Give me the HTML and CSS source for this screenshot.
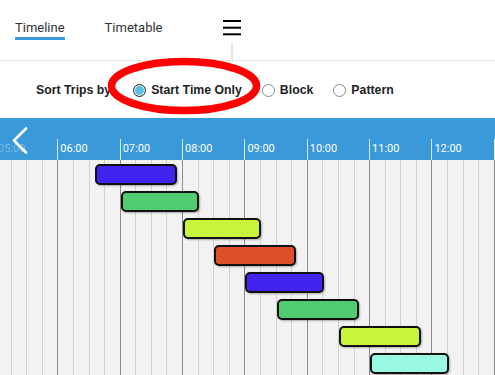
FILE: index.html
```html
<!DOCTYPE html>
<html>
<head>
<meta charset="utf-8">
<link rel="stylesheet" href="styles.css">
</head>
<body>
<div class="page">
  <nav class="nav">
    <a class="tab tab-active">Timeline</a>
    <a class="tab tab-second">Timetable</a>
    <div class="menu">
      <svg class="menu-icon" width="18" height="16" viewBox="0 0 18 16">
        <rect x="0" y="0" width="18" height="2" fill="#000"/>
        <rect x="0" y="6.7" width="18" height="2" fill="#000"/>
        <rect x="0" y="13.3" width="18" height="2" fill="#000"/>
      </svg>
      <span class="menu-divider"></span>
    </div>
  </nav>

  <div class="sort-row">
    <span class="sort-label">Sort Trips by</span>
    <label class="opt opt-first"><span class="radio radio-on"></span>Start Time Only</label>
    <label class="opt"><span class="radio"></span>Block</label>
    <label class="opt"><span class="radio"></span>Pattern</label>
  </div>

  <div class="ruler-band">
    <div class="ruler">
      <div class="tick tick-faded">05:00</div>
      <div class="tick">06:00</div>
      <div class="tick">07:00</div>
      <div class="tick">08:00</div>
      <div class="tick">09:00</div>
      <div class="tick">10:00</div>
      <div class="tick">11:00</div>
      <div class="tick">12:00</div>
      <div class="tick"></div>
    </div>
    <svg class="back" width="16" height="28" viewBox="0 0 16 28">
      <polyline points="14,1.5 2,13.5 14,25.5" fill="none" stroke="#fff" stroke-width="2.6" stroke-linecap="round" stroke-linejoin="round"/>
    </svg>
  </div>

  <div class="canvas">
    <div class="grid">
      <div class="hour"><i></i><i></i><i></i><i></i></div>
      <div class="hour"><i></i><i></i><i></i><i></i></div>
      <div class="hour"><i></i><i></i><i></i><i></i></div>
      <div class="hour"><i></i><i></i><i></i><i></i></div>
      <div class="hour"><i></i><i></i><i></i><i></i></div>
      <div class="hour"><i></i><i></i><i></i><i></i></div>
      <div class="hour"><i></i><i></i><i></i><i></i></div>
      <div class="hour"><i></i><i></i><i></i><i></i></div>
      <div class="hour"><i></i><i></i><i></i><i></i></div>
    </div>
    <div class="trip c-blue" style="left:95px;top:4px;width:82px"></div>
    <div class="trip c-green" style="left:121px;top:31px;width:78px"></div>
    <div class="trip c-lime" style="left:183px;top:58px;width:78px"></div>
    <div class="trip c-orange" style="left:214px;top:85px;width:82px"></div>
    <div class="trip c-blue" style="left:245px;top:112px;width:79px"></div>
    <div class="trip c-green" style="left:277px;top:139px;width:82px"></div>
    <div class="trip c-lime" style="left:339px;top:166px;width:82px"></div>
    <div class="trip c-cyan" style="left:370px;top:193px;width:79px"></div>
  </div>

  <svg class="annotation" width="160" height="64" viewBox="0 0 160 64">
    <ellipse cx="80" cy="31" rx="72.5" ry="24.5" fill="none" stroke="#ff0000" stroke-width="7.5"/>
  </svg>
</div>
</body>
</html>
```

FILE: styles.css
```css
* { box-sizing: border-box; }
html, body { margin: 0; padding: 0; background: #fff; }
body { width: 495px; height: 375px; overflow: hidden; }

.page {
  position: relative;
  width: 495px;
  height: 375px;
  overflow: hidden;
  font-family: Roboto, "Liberation Sans", sans-serif;
}

/* top navigation */
.nav {
  display: flex;
  align-items: flex-start;
  height: 61px;
  padding-left: 15px;
  border-bottom: 1px solid #e6e6e6;
}
.tab {
  display: block;
  font-size: 13px;
  line-height: 15px;
  color: #333;
  padding-top: 20px;
  padding-bottom: 2px;
  border-bottom: 3px solid transparent;
}
.tab-active { border-bottom-color: #3a99d8; }
.tab-second { margin-left: 40px; }
.menu {
  margin-left: 60px;
  width: 18px;
  height: 60px;
  display: flex;
  flex-direction: column;
  align-items: center;
  padding-top: 20px;
}
.menu-icon { display: block; }
.menu-divider {
  display: block;
  width: 2px;
  margin-top: 7px;
  flex: 1;
  background: #e6e6e6;
}

/* sort row */
.sort-row {
  display: flex;
  align-items: center;
  height: 57px;
  padding-left: 36px;
  padding-top: 1px;
  font-family: "Liberation Sans", Arial, sans-serif;
  font-weight: bold;
  font-size: 12.3px;
  color: #222;
}
.opt {
  display: flex;
  align-items: center;
  margin-left: 20px;
}
.opt-first { margin-left: 22px; }
.radio {
  display: inline-block;
  width: 13px;
  height: 13px;
  border-radius: 50%;
  border: 1px solid #8a8a8a;
  background: #fff;
  margin-right: 5px;
}
.radio-on {
  border: 1.5px solid #2a2a2a;
  background: #5ac0dc;
  box-shadow: inset 0 0 0 1px #e8f6fa;
}

/* blue ruler */
.ruler-band {
  position: relative;
  height: 42px;
  background: #3a99d8;
  padding-top: 21px;
  overflow: hidden;
}
.ruler {
  display: flex;
  margin-left: -5px;
  height: 21px;
}
.tick {
  flex: 0 0 62.35px;
  border-left: 1px solid #d8ecf8;
  color: #fff;
  font-family: Roboto, sans-serif;
  font-size: 11px;
  line-height: 12px;
  padding-top: 4px;
  padding-left: 2px;
}
.tick-faded { color: #72b8e6; border-left-color: transparent; }
.back {
  position: absolute;
  left: 12px;
  top: 9px;
}

/* timeline canvas */
.canvas {
  position: relative;
  height: 215px;
  background: #f2f2f2;
  overflow: hidden;
}
.grid {
  display: flex;
  margin-left: -5px;
  height: 100%;
}
.hour {
  flex: 0 0 62.35px;
  display: flex;
  border-left: 1px solid #8c8c8c;
}
.hour i {
  flex: 1;
  border-left: 1px solid #d2d2d2;
}
.hour i:first-child { border-left: none; }

.trip {
  position: absolute;
  height: 21px;
  border: 2px solid #111;
  border-radius: 5px;
  box-shadow: 1px 1px 2px rgba(0, 0, 0, 0.3);
}
.c-blue { background: #4224f0; }
.c-green { background: #52cc72; }
.c-lime { background: #c8f53c; }
.c-orange { background: #dd4f2a; }
.c-cyan { background: #98f8e0; }

/* red annotation ellipse */
.annotation {
  position: absolute;
  left: 104px;
  top: 55px;
}
```
